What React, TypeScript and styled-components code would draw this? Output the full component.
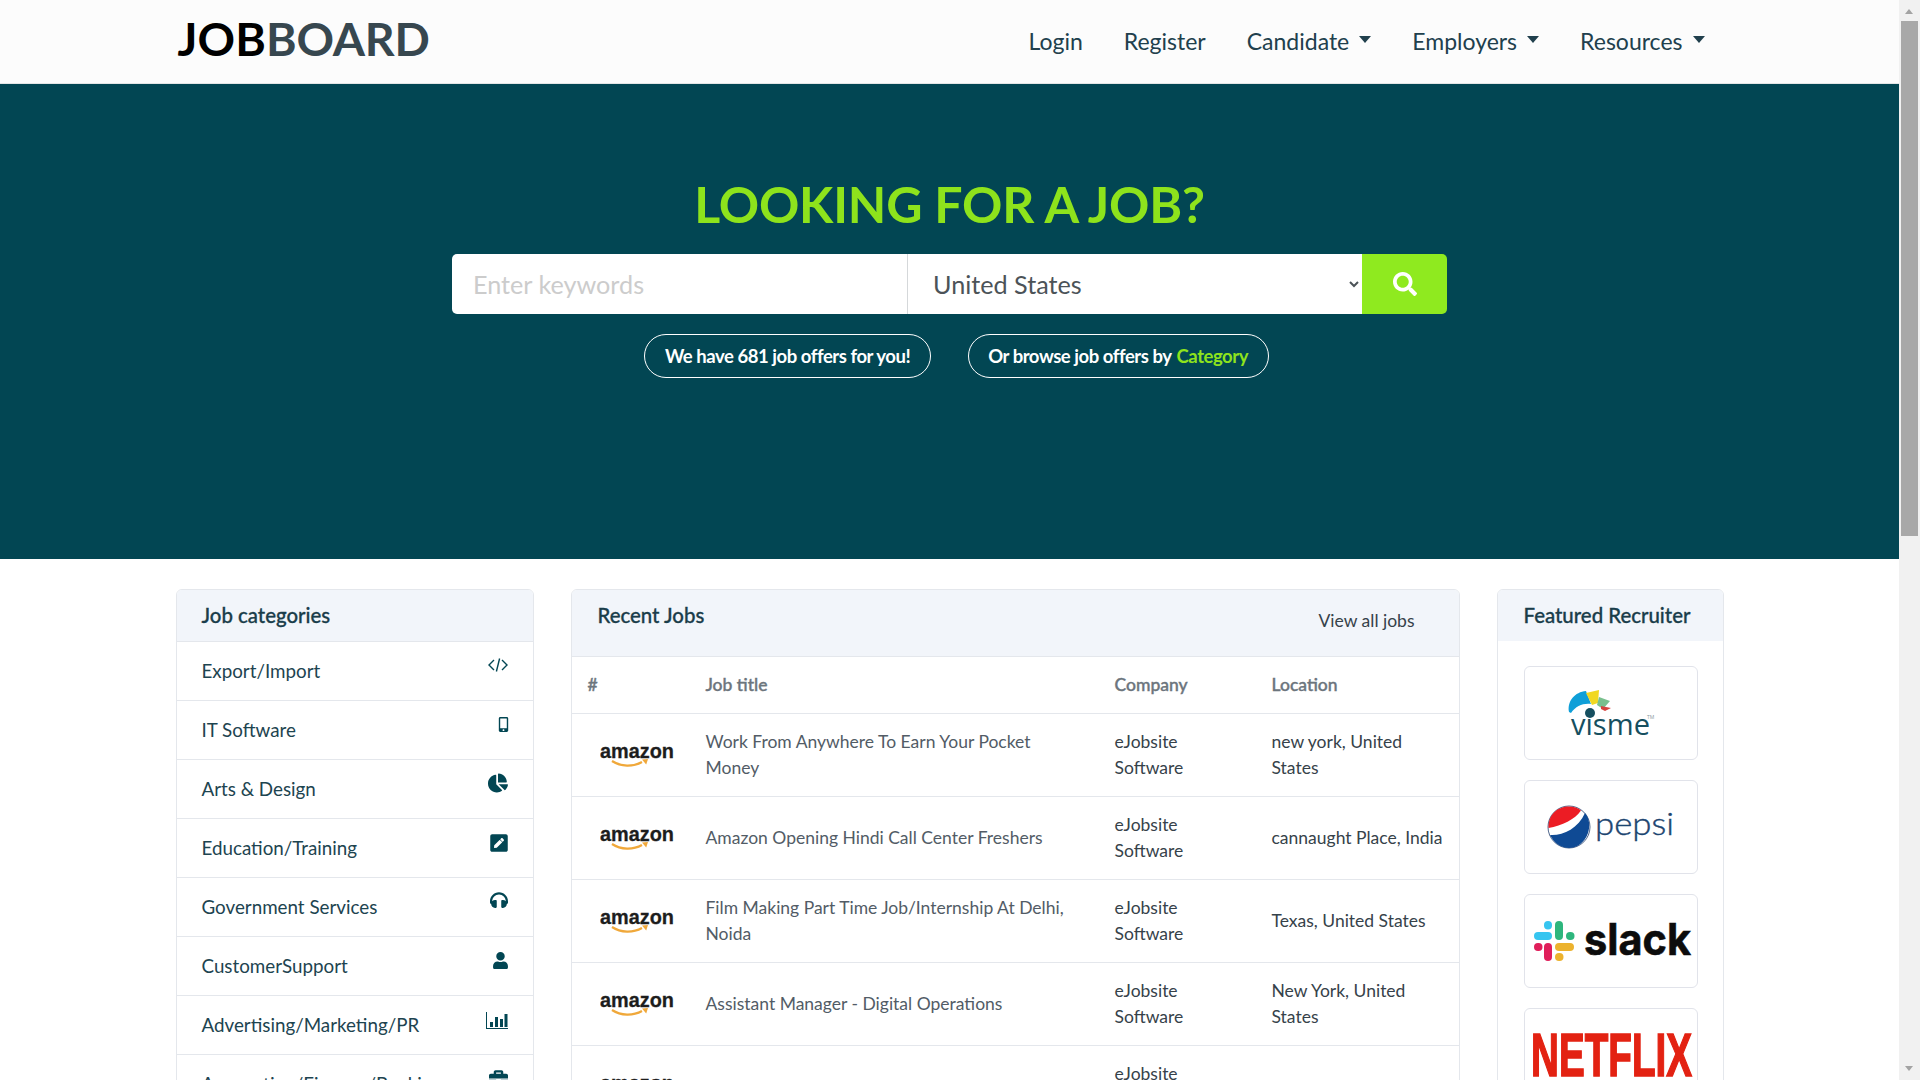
import React from 'react'
import styled, { createGlobalStyle } from 'styled-components'
import { FaSearch, FaMobileAlt, FaChartPie, FaPenSquare, FaHeadphones, FaUser, FaBriefcase, FaCog } from 'react-icons/fa'

const GlobalStyle = createGlobalStyle`
  * { box-sizing: border-box; }
  body {
    margin: 0;
    padding-right: 21px;
    background: #fff;
    font-family: Lato, "Liberation Sans", sans-serif;
    color: #2f3e48;
  }
`

const ScrollTrack = styled.div`
  position: fixed;
  top: 0;
  right: 0;
  bottom: 0;
  width: 21px;
  background: #f1f1f1;
`

const ScrollThumb = styled.div`
  position: absolute;
  top: 21px;
  left: 2px;
  width: 17px;
  height: 515px;
  background: #a8a8a8;
`

const ScrollArrow = styled.i<{ $down?: boolean }>`
  position: absolute;
  left: 6px;
  ${p => (p.$down ? 'bottom: 9px;' : 'top: 9px;')}
  width: 0;
  height: 0;
  border-left: 4.5px solid transparent;
  border-right: 4.5px solid transparent;
  ${p => (p.$down ? 'border-top' : 'border-bottom')}: 5px solid #a3a3a3;
`

const Page = styled.div`
  min-height: 2180px;
  display: flex;
  flex-direction: column;
`

const Navbar = styled.nav`
  height: 84px;
  background: #fcfcfc;
  border-bottom: 1px solid #e3e5e6;
`

const Container = styled.div`
  width: 1548px;
  margin: 0 auto;
`

const NavInner = styled(Container)`
  height: 83px;
  display: flex;
  align-items: center;
  justify-content: space-between;
`

const Brand = styled.a`
  font-size: 46.5px;
  font-weight: 700;
  letter-spacing: -0.2px;
  color: #37474f;
  padding: 0 0 7px 2px;
  span { color: #000; letter-spacing: 0.1px; }
`

const NavLinks = styled.ul`
  display: flex;
  list-style: none;
  margin: 0;
  padding: 0 19px 2px 0;
  gap: 41px;
`

const NavLink = styled.li`
  font-size: 23px;
  color: #21404d;
  display: flex;
  align-items: center;
  gap: 10px;
`

const Caret = styled.i`
  width: 0;
  height: 0;
  border-top: 7px solid #21404d;
  border-left: 6.5px solid transparent;
  border-right: 6.5px solid transparent;
  margin-bottom: 3px;
`

const Hero = styled.section`
  height: 475px;
  background: #024653;
  display: flex;
  flex-direction: column;
  align-items: center;
  padding-top: 89px;
`

const HeroTitle = styled.h1`
  margin: 0 0 19px;
  font-size: 50px;
  line-height: 62px;
  font-weight: 700;
  letter-spacing: -0.2px;
  color: #8ee31c;
`

const SearchBar = styled.form`
  display: flex;
  width: 995px;
  height: 60px;
  margin: 0 0 20px;
  border-radius: 5px;
  overflow: hidden;
`

const KeywordInput = styled.input`
  width: 456px;
  border: 0;
  border-right: 1px solid #d5d8da;
  padding: 0 21px;
  font: 25.2px Lato, sans-serif;
  outline: none;
  &::placeholder { color: #cccccc; }
`

const CountrySelect = styled.select`
  width: 454px;
  border: 0;
  background: #fff;
  padding: 0 21px;
  font: 25.2px Lato, sans-serif;
  color: #4c5358;
  outline: none;
`

const SearchButton = styled.button`
  flex: 1;
  border: 0;
  background: #8fea1f;
  color: #fff;
  font-size: 24px;
  display: flex;
  align-items: center;
  justify-content: center;
`

const PillRow = styled.div`
  display: flex;
  gap: 37px;
  margin-left: 14px;
`

const Pill = styled.a`
  height: 44px;
  padding: 0 19.5px;
  display: flex;
  align-items: center;
  gap: 5px;
  border: 1px solid #fff;
  border-radius: 22px;
  color: #fff;
  font-size: 18.5px;
  font-weight: 700;
  letter-spacing: -0.45px;
  em { font-style: normal; color: #8ee31c; }
`

const Columns = styled(Container)`
  display: flex;
  align-items: flex-start;
  padding-top: 30px;
  gap: 37px;
`

const Panel = styled.div<{ $width: number }>`
  width: ${p => p.$width}px;
  flex: none;
  border: 1px solid #e4e7ec;
  border-radius: 6px;
  overflow: hidden;
  background: #fff;
`

const PanelHead = styled.div<{ $tall?: boolean; $inset?: number }>`
  background: #f2f5fa;
  height: ${p => (p.$tall ? 67 : 51)}px;
  padding: 10px 25px 0 ${p => p.$inset ?? 25}px;
  display: flex;
  justify-content: space-between;
  border-bottom: ${p => (p.$tall ? '1px solid #e4e7ec' : '0')};
`

const PanelTitle = styled.h5`
  margin: 0;
  font-size: 20.4px;
  line-height: 30px;
  font-weight: 500;
  -webkit-text-stroke: 0.3px currentColor;
  color: #1a3d4a;
`

const ViewAll = styled.a`
  font-size: 17.5px;
  line-height: 26px;
  margin: 8px 19px 0 0;
  color: #36424a;
`

const CategoryRow = styled.div`
  height: 59px;
  border-top: 1px solid #e4e7ec;
  padding: 0 25px 2px;
  display: flex;
  align-items: center;
  justify-content: space-between;
  font-size: 18.8px;
  color: #1d4450;
  &:first-of-type { border-top: 0; }
`

const CategoryIcon = styled.span<{ $top?: number; $shift?: number }>`
  align-self: flex-start;
  margin: ${p => p.$top ?? 14}px ${p => p.$shift ?? 0}px 0 0;
  line-height: 0;
  color: #024653;
`

const JobsTable = styled.table`
  width: 100%;
  border-collapse: collapse;
  table-layout: fixed;
  font-size: 17.5px;
  line-height: 26px;
`

const HeadCell = styled.th<{ $width?: number }>`
  width: ${p => (p.$width ? `${p.$width}px` : 'auto')};
  height: 56px;
  padding: 0 5px 0 15px;
  text-align: left;
  font-weight: 500;
  -webkit-text-stroke: 0.4px currentColor;
  color: #6c757d;
  border-bottom: 1px solid #e4e7ec;
  &:first-child { padding-left: 16px; }
`

const Cell = styled.td<{ $muted?: boolean; $wrapAt?: number }>`
  height: 83px;
  padding: 0 ${p => p.$wrapAt ?? 5}px 0 15px;
  color: ${p => (p.$muted ? '#525c66' : '#36424a')};
  border-bottom: 1px solid #e4e7ec;
  vertical-align: middle;
`

const LogoCell = styled(Cell)`
  padding: 0 0 0 28px;
  svg { display: block; }
`

const RecruiterList = styled.div`
  padding: 25px 26px 20px;
  display: flex;
  flex-direction: column;
  gap: 20px;
`

const RecruiterCard = styled.div`
  width: 174px;
  height: 94px;
  border: 1px solid #e1e3ea;
  border-radius: 6px;
  svg { display: block; }
`

const Footer = styled.footer`
  margin-top: auto;
  background: #024653;
  color: #fff;
  font-size: 16px;
  text-align: center;
  padding: 30px 0;
`

const CodeIcon = () => (
  <svg width="20" height="14" viewBox="0 0 20 14" fill="none" stroke="#024653" strokeWidth="1.4">
    <path d="M6 2 1 7l5 5M14 2l5 5-5 5M11.6.5 8.4 13.500" />
  </svg>
)

const BarsIcon = () => (
  <svg width="22" height="17" viewBox="0 0 22 17" fill="#024653">
    <path d="M0 0h1v16h21v1H0z" />
    <path d="M4 10h3v5H4zM9 5h3v10H9zM14 7h3v8h-3zM18.500 2h3v13h-3z" />
  </svg>
)

const AmazonLogo = () => (
  <svg width="76" height="28" viewBox="0 0 76 28">
    <text x="0" y="17" fontFamily="'Liberation Sans', sans-serif" fontWeight="700" fontSize="21" textLength="74" lengthAdjust="spacingAndGlyphs" fill="#1d1d1d" stroke="#1d1d1d" strokeWidth="0.3">amazon</text>
    <path d="M12 20c9 6 21 6 30 1" fill="none" stroke="#f0a83a" strokeWidth="2.2" />
    <path d="M42 18.500l6-.5-1.800 5.500z" fill="#f0a83a" />
  </svg>
)

const VismeLogo = () => (
  <svg width="172" height="92" viewBox="0 0 172 92">
    <path d="M44 45c-2-11 6-20 17-21l5 13c-8-1-15 2-20 9z" fill="#0f9fd8" />
    <path d="M61 26l13-3-1 13-6 2z" fill="#f1d821" />
    <path d="M74 30l11 4-7 8-6-4z" fill="#79c08e" />
    <path d="M76 39l10 2-6 3-4-2z" fill="#d8433e" />
    <circle cx="65" cy="46" r="5" fill="#164f5f" />
    <text x="46" y="68" fontFamily="'Open Sans', sans-serif" fontSize="29" textLength="79" lengthAdjust="spacingAndGlyphs" fill="#164f5f">visme</text>
    <text x="122" y="52" fontFamily="'Open Sans', sans-serif" fontSize="5" fill="#8a9aa0">TM</text>
  </svg>
)

const PepsiLogo = () => (
  <svg width="172" height="92" viewBox="0 0 172 92">
    <circle cx="44" cy="46" r="21" fill="#fff" stroke="#24406f" strokeWidth="0.8" />
    <path d="M23.500 47C23 33 33 25.500 44 25.500c5 0 9 1.500 12 4-6 9-19 15-32.500 17.500z" fill="#ec1c24" />
    <path d="M25 54c12 1 28-6 35-22 5 6 5 14 3 20-3 9-11 15-19 15-8 0-15-5-19-13z" fill="#0f4a94" />
    <text x="70" y="54" fontFamily="Lato, sans-serif" fontWeight="300" fontSize="31" textLength="79" lengthAdjust="spacingAndGlyphs" fill="#1c4570" stroke="#1c4570" strokeWidth="0.4">pepsi</text>
  </svg>
)

const SlackLogo = () => (
  <svg width="172" height="92" viewBox="0 0 172 92" strokeLinecap="round" strokeWidth="8" fill="none">
    <path d="M13 41h10" stroke="#36c5f0" />
    <path d="M23 30v.5" stroke="#36c5f0" />
    <path d="M34 30v11" stroke="#2eb67d" />
    <path d="M45 41h.5" stroke="#2eb67d" />
    <path d="M13 52h.5" stroke="#e01e5a" />
    <path d="M23 52v10" stroke="#e01e5a" />
    <path d="M34 52h11" stroke="#ecb22e" />
    <path d="M34 62h.5" stroke="#ecb22e" />
    <text x="59" y="60" fontFamily="Inter, sans-serif" fontWeight="700" fontSize="44" textLength="107" lengthAdjust="spacingAndGlyphs" fill="#0c0c0c" stroke="#0c0c0c" strokeWidth="0.6">slack</text>
  </svg>
)

const NetflixLogo = () => (
  <svg width="172" height="92" viewBox="0 0 172 92">
    <text x="6" y="67" fontFamily="'Liberation Sans', sans-serif" fontWeight="700" fontSize="62" textLength="161" lengthAdjust="spacingAndGlyphs" fill="#e32212" stroke="#e32212" strokeWidth="1.6">NETFLIX</text>
  </svg>
)

const categories: { name: string; icon: React.ReactNode; top?: number; shift?: number }[] = [
  { name: 'Export/Import', icon: <CodeIcon />, top: 16 },
  { name: 'IT Software', icon: <FaMobileAlt size={15} />, top: 16, shift: -3 },
  { name: 'Arts & Design', icon: <FaChartPie size={20} />, top: 13 },
  { name: 'Education/Training', icon: <FaPenSquare size={20} />, shift: -1 },
  { name: 'Government Services', icon: <FaHeadphones size={18} />, top: 13 },
  { name: 'CustomerSupport', icon: <FaUser size={17} />, top: 15, shift: -1 },
  { name: 'Advertising/Marketing/PR', icon: <BarsIcon />, top: 16 },
  { name: 'Accounting/Finance/Banking', icon: <FaBriefcase size={19} /> },
  { name: 'Engineering', icon: <FaCog size={18} /> },
]

const jobs = [
  { title: 'Work From Anywhere To Earn Your Pocket Money', location: 'new york, United States' },
  { title: 'Amazon Opening Hindi Call Center Freshers', location: 'cannaught Place, India' },
  { title: 'Film Making Part Time Job/Internship At Delhi, Noida', location: 'Texas, United States' },
  { title: 'Assistant Manager - Digital Operations', location: 'New York, United States' },
  { title: 'Customer Support Executive', location: 'Delhi, India' },
  { title: 'Senior Software Engineer', location: 'New York, United States' },
]

const App = () => {
  return (
    <Page>
      <GlobalStyle />
      <Navbar>
        <NavInner>
          <Brand><span>JOB</span>BOARD</Brand>
          <NavLinks>
            <NavLink>Login</NavLink>
            <NavLink>Register</NavLink>
            <NavLink>Candidate <Caret /></NavLink>
            <NavLink>Employers <Caret /></NavLink>
            <NavLink>Resources <Caret /></NavLink>
          </NavLinks>
        </NavInner>
      </Navbar>

      <Hero>
        <HeroTitle>LOOKING FOR A JOB?</HeroTitle>
        <SearchBar>
          <KeywordInput placeholder="Enter keywords" />
          <CountrySelect defaultValue="United States">
            <option>United States</option>
            <option>India</option>
          </CountrySelect>
          <SearchButton type="button"><FaSearch /></SearchButton>
        </SearchBar>
        <PillRow>
          <Pill>We have 681 job offers for you!</Pill>
          <Pill>Or browse job offers by <em>Category</em></Pill>
        </PillRow>
      </Hero>

      <Columns>
        <Panel $width={358}>
          <PanelHead><PanelTitle>Job categories</PanelTitle></PanelHead>
          {categories.map(c => (
            <CategoryRow key={c.name}>
              {c.name}
              <CategoryIcon $top={c.top} $shift={c.shift}>{c.icon}</CategoryIcon>
            </CategoryRow>
          ))}
        </Panel>

        <Panel $width={889}>
          <PanelHead $tall $inset={26}>
            <PanelTitle>Recent Jobs</PanelTitle>
            <ViewAll>View all jobs</ViewAll>
          </PanelHead>
          <JobsTable>
            <thead>
              <tr>
                <HeadCell $width={119}>#</HeadCell>
                <HeadCell $width={409}>Job title</HeadCell>
                <HeadCell $width={157}>Company</HeadCell>
                <HeadCell>Location</HeadCell>
              </tr>
            </thead>
            <tbody>
              {jobs.map(j => (
                <tr key={j.title}>
                  <LogoCell><AmazonLogo /></LogoCell>
                  <Cell $muted $wrapAt={30}>{j.title}</Cell>
                  <Cell $wrapAt={40}>eJobsite Software</Cell>
                  <Cell>{j.location}</Cell>
                </tr>
              ))}
            </tbody>
          </JobsTable>
        </Panel>

        <Panel $width={227}>
          <PanelHead $inset={26}><PanelTitle>Featured Recruiter</PanelTitle></PanelHead>
          <RecruiterList>
            <RecruiterCard><VismeLogo /></RecruiterCard>
            <RecruiterCard><PepsiLogo /></RecruiterCard>
            <RecruiterCard><SlackLogo /></RecruiterCard>
            <RecruiterCard><NetflixLogo /></RecruiterCard>
          </RecruiterList>
        </Panel>
      </Columns>

      <Footer>JobBoard</Footer>

      <ScrollTrack>
        <ScrollArrow />
        <ScrollThumb />
        <ScrollArrow $down />
      </ScrollTrack>
    </Page>
  )
}

export default App
